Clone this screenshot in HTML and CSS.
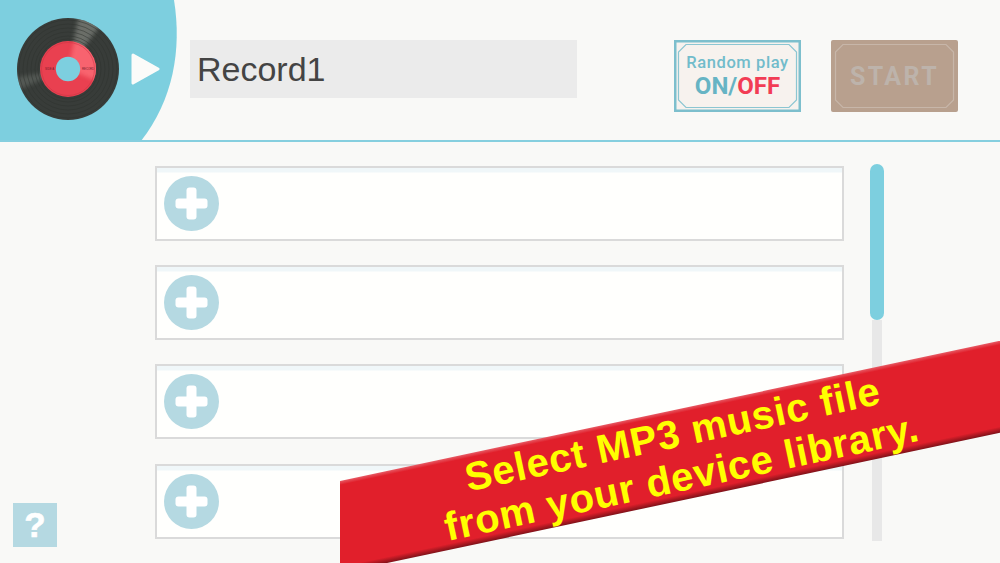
FILE: index.html
```html
<!DOCTYPE html>
<html lang="en">
<head>
<meta charset="utf-8">
<title>Record1</title>
<link rel="stylesheet" href="styles.css">
</head>
<body>
<div class="page">
  <header class="header">
    <div class="brand">
      <svg class="disc" viewBox="0 0 102 102" width="102" height="102">
        <defs>
          <clipPath id="discClip"><circle cx="51" cy="51" r="51"/></clipPath>
          <clipPath id="labelClip"><circle cx="51" cy="51" r="28"/></clipPath>
          <filter id="soft" x="-30%" y="-30%" width="160%" height="160%"><feGaussianBlur stdDeviation="2"/></filter>
        </defs>
        <circle cx="51" cy="51" r="51" fill="#383c39"/>
        <g clip-path="url(#discClip)">
          <path d="M51 51L62 -4L90 -2Z" fill="#7b7f79" filter="url(#soft)" opacity=".75"/>
          <path d="M51 51L-6 60L-4 74Z" fill="#6b6f6a" filter="url(#soft)" opacity=".55"/>
        </g>
        <g fill="none" stroke="#2e322f" stroke-width=".5">
          <circle cx="51" cy="51" r="49"/>
          <circle cx="51" cy="51" r="45"/>
          <circle cx="51" cy="51" r="41"/>
          <circle cx="51" cy="51" r="37"/>
          <circle cx="51" cy="51" r="33"/>
          <circle cx="51" cy="51" r="30"/>
        </g>
        <circle cx="51" cy="51" r="28" fill="#e94050"/>
        <g clip-path="url(#labelClip)">
          <path d="M51 51L58 20L86 34L82 64Z" fill="#fb6a74" filter="url(#soft)" opacity=".85"/>
        </g>
        <circle cx="51" cy="51" r="26.5" fill="none" stroke="#c93243" stroke-width=".5"/>
        <text class="disc-label" x="28" y="52">SIDE A</text>
        <text class="disc-label" x="65" y="52">RECORD</text>
        <circle cx="51" cy="51" r="12.2" fill="#7dcfdf"/>
      </svg>
      <svg class="play" viewBox="0 0 29 32" width="29" height="32">
        <path d="M2 2L27 16L2 30Z" fill="#fbfbf9" stroke="#fbfbf9" stroke-width="3" stroke-linejoin="round"/>
      </svg>
    </div>
    <div class="title-field">Record1</div>
    <button class="ticket ticket-random">
      <svg class="ticket-frame" viewBox="0 0 127 72" width="127" height="72"><path d="M12 4.5H115L122.5 12V60L115 67.5H12L4.5 60V12Z" fill="none" stroke="#8cc6d2" stroke-width="1.2"/></svg>
      <span class="ticket-top">Random play</span>
      <span class="ticket-bottom"><span class="on">ON/</span><span class="off">OFF</span></span>
    </button>
    <button class="ticket ticket-start">
      <svg class="ticket-frame" viewBox="0 0 127 72" width="127" height="72"><path d="M12 4.5H115L122.5 12V60L115 67.5H12L4.5 60V12Z" fill="none" stroke="#c7b6a9" stroke-width="1.2"/></svg>
      START
    </button>
  </header>

  <main class="main">
    <div class="side">
      <button class="help">?</button>
    </div>
    <div class="list">
      <div class="row"><svg class="add" viewBox="0 0 55 55" width="55" height="55"><circle cx="27.5" cy="27.5" r="27.5" fill="#b5d9e2"/><rect x="11.5" y="22.5" width="32" height="10" rx="3" fill="#fff"/><rect x="22.5" y="11.5" width="10" height="32" rx="3" fill="#fff"/></svg></div>
      <div class="row"><svg class="add" viewBox="0 0 55 55" width="55" height="55"><circle cx="27.5" cy="27.5" r="27.5" fill="#b5d9e2"/><rect x="11.5" y="22.5" width="32" height="10" rx="3" fill="#fff"/><rect x="22.5" y="11.5" width="10" height="32" rx="3" fill="#fff"/></svg></div>
      <div class="row"><svg class="add" viewBox="0 0 55 55" width="55" height="55"><circle cx="27.5" cy="27.5" r="27.5" fill="#b5d9e2"/><rect x="11.5" y="22.5" width="32" height="10" rx="3" fill="#fff"/><rect x="22.5" y="11.5" width="10" height="32" rx="3" fill="#fff"/></svg></div>
      <div class="row"><svg class="add" viewBox="0 0 55 55" width="55" height="55"><circle cx="27.5" cy="27.5" r="27.5" fill="#b5d9e2"/><rect x="11.5" y="22.5" width="32" height="10" rx="3" fill="#fff"/><rect x="22.5" y="11.5" width="10" height="32" rx="3" fill="#fff"/></svg></div>
    </div>
    <div class="scrollbar"><div class="thumb"></div><div class="track"></div></div>
  </main>

  <div class="ribbon">
    <div class="ribbon-band">
      <p class="ribbon-text">Select MP3 music file<br>from your device library.</p>
    </div>
  </div>
</div>
</body>
</html>
```
FILE: styles.css
```css
* { box-sizing: border-box; }
html, body { margin: 0; padding: 0; }
body { font-family: "Liberation Sans", Arial, sans-serif; background: #f9f9f7; }
button { font-family: inherit; padding: 0; cursor: pointer; }

.page {
  position: relative;
  width: 1000px;
  height: 563px;
  overflow: hidden;
  background: #f9f9f7;
}

.header {
  display: flex;
  align-items: flex-start;
  height: 142px;
  border-bottom: 2px solid #86cfdf;
}

.brand {
  flex: none;
  display: flex;
  align-items: center;
  gap: 12px;
  width: 178px;
  height: 140px;
  padding: 0 0 2px 17px;
  background: #7dcfdf;
  clip-path: path("M0 0H174C182 50 173 100 141 141H0Z");
}
.disc { flex: none; }
.disc-label { font-size: 2.8px; fill: #6d1c28; font-family: "Liberation Sans", sans-serif; }
.play { flex: none; }

.title-field {
  flex: none;
  width: 387px;
  height: 58px;
  margin: 40px 0 0 12px;
  padding-left: 7px;
  background: #ebebeb;
  color: #444;
  font-size: 34px;
  line-height: 58px;
}

.ticket {
  position: relative;
  flex: none;
  display: flex;
  flex-direction: column;
  align-items: center;
  justify-content: center;
  width: 127px;
  height: 72px;
  margin-top: 40px;
  font-family: Roboto, "Liberation Sans", sans-serif;
  font-weight: bold;
}
.ticket-frame { position: absolute; left: 0; top: 0; }
.ticket-random {
  margin-left: 97px;
  border: none;
  box-shadow: inset 0 0 0 2.5px #7dbfcd;
  background: #f7f2ee;
}
.ticket-top { color: #72bccb; font-size: 16.5px; font-weight: 500; line-height: 19px; letter-spacing: .6px; }
.ticket-bottom { font-size: 24px; line-height: 28px; }
.on { color: #66b4c4; }
.off { color: #f23c55; }

.ticket-start {
  margin-left: 30px;
  border: none;
  border-radius: 2px;
  background: #b8a08e;
  color: #bdb3ab;
  font-size: 25px;
  letter-spacing: 2.4px;
}

.main {
  display: flex;
  height: 421px;
  padding-top: 24px;
}
.side {
  flex: none;
  width: 155px;
  padding: 337px 0 0 13px;
}
.help {
  display: block;
  width: 44px;
  height: 44px;
  border: none;
  background: #b5d9e2;
  color: #fff;
  font-size: 35px;
  font-weight: bold;
  line-height: 44px;
  -webkit-text-stroke: .6px #fff;
}

.list {
  flex: none;
  display: flex;
  flex-direction: column;
  gap: 24.2px;
  width: 689px;
}
.row {
  display: flex;
  align-items: center;
  height: 75px;
  padding-left: 7px;
  border: 2px solid #dadada;
  background: linear-gradient(#f0f7f9 0 4px, #fffffd 5px);
}
.add { flex: none; }

.scrollbar {
  flex: none;
  display: flex;
  flex-direction: column;
  align-items: center;
  width: 14px;
  height: 377px;
  margin: -2px 0 0 26px;
}
.thumb { flex: none; width: 14px; height: 156px; border-radius: 7px; background: #7dcfdf; }
.track { flex: 1; width: 10px; background: #e8e8e8; }

.ribbon {
  position: absolute;
  left: 340px;
  top: 341px;
  right: 0;
  bottom: 0;
  overflow: hidden;
}
.ribbon-band {
  position: absolute;
  left: -30px;
  top: 140px;
  display: flex;
  align-items: center;
  justify-content: center;
  width: 746px;
  height: 90px;
  padding-right: 16px;
  transform: rotate(-12deg);
  transform-origin: 30px 0;
  background: linear-gradient(#e75a64 0, #e11f2b 4px, #e11f2b 84px, #7f1219 90px);
}
.ribbon-text {
  margin: 0;
  color: #ffff00;
  font-size: 40px;
  font-weight: bold;
  line-height: 44px;
  letter-spacing: .8px;
  text-align: center;
  white-space: nowrap;
}
```
